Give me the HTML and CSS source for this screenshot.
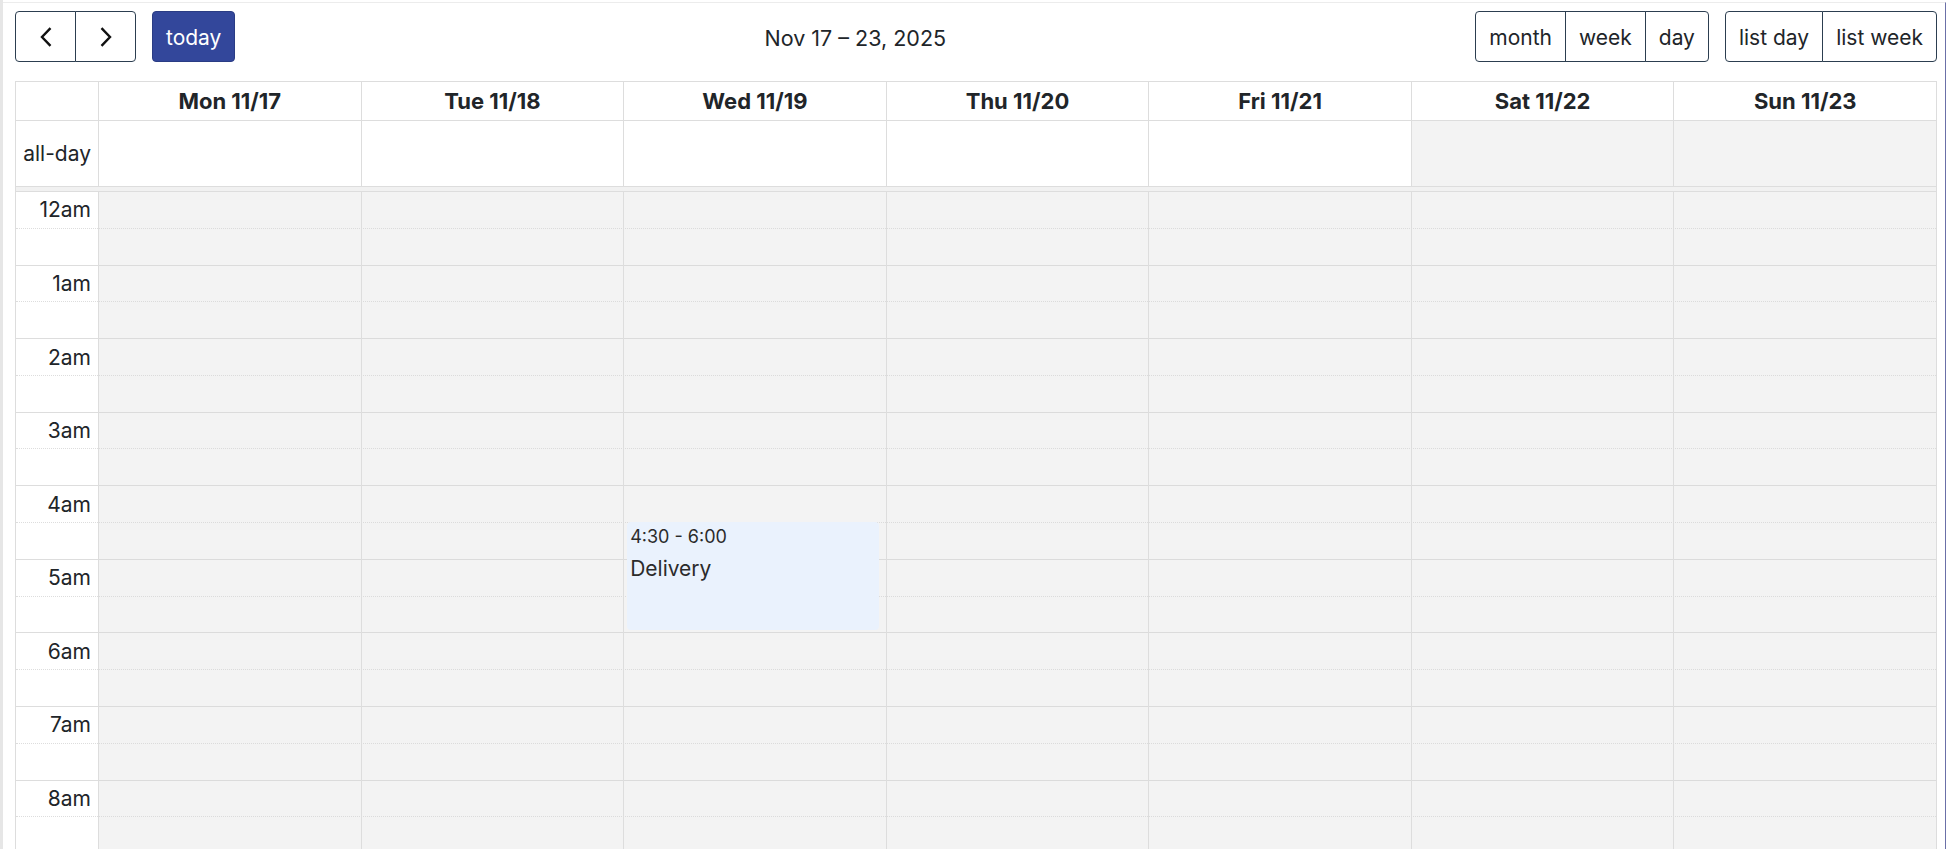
FILE: index.html
```html
<!DOCTYPE html>
<html lang="en">
<head>
<meta charset="utf-8">
<title>Calendar week</title>
<link rel="stylesheet" href="styles.css">
</head>
<body>
<div class="page">
  <div class="shell">
    <div class="toolbar">
      <div class="tb-group">
        <div class="btn-group">
          <button class="btn btn-icon" aria-label="prev">
            <svg width="12" height="20" viewBox="0 0 12 20"><polyline points="10.5,1.2 2,10 10.5,18.8" fill="none" stroke="#111" stroke-width="2.4" stroke-linejoin="miter"/></svg>
          </button>
          <button class="btn btn-icon" aria-label="next">
            <svg width="12" height="20" viewBox="0 0 12 20"><polyline points="1.5,1.2 10,10 1.5,18.8" fill="none" stroke="#111" stroke-width="2.4" stroke-linejoin="miter"/></svg>
          </button>
        </div>
        <button class="btn btn-primary">today</button>
      </div>
      <h2 class="title">Nov 17 – 23, 2025</h2>
      <div class="tb-group">
        <div class="btn-group">
          <button class="btn">month</button>
          <button class="btn">week</button>
          <button class="btn">day</button>
        </div>
        <div class="btn-group">
          <button class="btn">list day</button>
          <button class="btn">list week</button>
        </div>
      </div>
    </div>

    <div class="cal">
      <div class="row head">
        <div class="cell axis"></div>
        <div class="cell">Mon 11/17</div>
        <div class="cell">Tue 11/18</div>
        <div class="cell">Wed 11/19</div>
        <div class="cell">Thu 11/20</div>
        <div class="cell">Fri 11/21</div>
        <div class="cell">Sat 11/22</div>
        <div class="cell">Sun 11/23</div>
      </div>
      <div class="row allday">
        <div class="cell axis"><span class="axis-label">all-day</span></div>
        <div class="cell"></div>
        <div class="cell"></div>
        <div class="cell"></div>
        <div class="cell"></div>
        <div class="cell"></div>
        <div class="cell shaded"></div>
        <div class="cell shaded"></div>
      </div>
      <div class="divider"></div>
      <div class="tbody">
        <div class="slots">
          <div class="slot"><span class="slot-label">12am</span></div><div class="slot half"></div>
          <div class="slot"><span class="slot-label">1am</span></div><div class="slot half"></div>
          <div class="slot"><span class="slot-label">2am</span></div><div class="slot half"></div>
          <div class="slot"><span class="slot-label">3am</span></div><div class="slot half"></div>
          <div class="slot"><span class="slot-label">4am</span></div><div class="slot half"></div>
          <div class="slot"><span class="slot-label">5am</span></div><div class="slot half"></div>
          <div class="slot"><span class="slot-label">6am</span></div><div class="slot half"></div>
          <div class="slot"><span class="slot-label">7am</span></div><div class="slot half"></div>
          <div class="slot"><span class="slot-label">8am</span></div><div class="slot half"></div>
        </div>
        <div class="cols">
          <div class="col-axis"></div>
          <div class="col"></div>
          <div class="col"></div>
          <div class="col">
            <div class="event">
              <div class="event-time">4:30 - 6:00</div>
              <div class="event-title">Delivery</div>
            </div>
          </div>
          <div class="col"></div>
          <div class="col"></div>
          <div class="col"></div>
          <div class="col"></div>
        </div>
      </div>
    </div>
  </div>
</div>
</body>
</html>
```

FILE: styles.css
```css
html, body {
  margin: 0;
  padding: 0;
  height: 100%;
  overflow: hidden;
  background: #fff;
}

body {
  font-family: Inter, "Liberation Sans", sans-serif;
  font-size: 21px;
  color: #212529;
  --slot: 36.786px;
  --line: #dddddd;
}

.page {
  height: 100%;
  box-sizing: border-box;
  border-left: 3px solid #e6e6e6;
  padding-top: 2px;
}

.shell {
  height: 100%;
  box-sizing: border-box;
  border-top: 1px solid #ececec;
  border-right: 1px solid #6b70a8;
  margin-right: 1px;
  padding: 8px 8px 0 12px;
  display: flex;
  flex-direction: column;
}

/* toolbar */
.toolbar {
  display: flex;
  justify-content: space-between;
  align-items: center;
  margin-bottom: 19px;
}

.tb-group {
  display: flex;
  gap: 16px;
}

.btn-group {
  display: flex;
}

.btn {
  height: 51px;
  box-sizing: border-box;
  border: 1px solid #2c3e50;
  border-radius: 4px;
  background: #fff;
  color: #212529;
  font: inherit;
  line-height: 1.5;
  padding: 2px 13px 0;
  display: inline-flex;
  align-items: center;
  justify-content: center;
  cursor: pointer;
}

.btn-group .btn {
  border-radius: 0;
}

.btn-group .btn:first-child {
  border-radius: 4px 0 0 4px;
}

.btn-group .btn:last-child {
  border-radius: 0 4px 4px 0;
}

.btn-group .btn + .btn {
  margin-left: -1px;
}

.btn-icon {
  width: 61px;
  padding: 0;
}

.btn-primary {
  background: #33479b;
  border-color: #2a3c84;
  color: #fff;
}

.title {
  margin: 0;
  padding-top: 2px;
  font-size: 21.5px;
  font-weight: 400;
  color: #212529;
}

/* calendar grid */
.cal {
  border: 1px solid var(--line);
  border-bottom: 0;
  flex: 1;
  min-height: 0;
}

.row {
  display: grid;
  grid-template-columns: 82px repeat(7, 1fr);
  border-bottom: 1px solid var(--line);
}

.cell {
  border-left: 1px solid var(--line);
  box-sizing: border-box;
}

.cell.axis {
  border-left: 0;
}

.head .cell {
  height: 38px;
  display: flex;
  align-items: center;
  justify-content: center;
  font-size: 22px;
  font-weight: 700;
  color: #212529;
}

.allday .cell {
  height: 65px;
}

.allday .axis {
  display: flex;
  align-items: center;
  justify-content: flex-end;
  padding-right: 7px;
}

.shaded {
  background: rgba(215, 215, 215, 0.3);
}

.divider {
  height: 4px;
  background: rgba(208, 208, 208, 0.3);
  border-bottom: 1px solid var(--line);
}

.tbody {
  display: grid;
}

.slots,
.cols {
  grid-area: 1 / 1;
}

.slot {
  height: var(--slot);
  box-sizing: border-box;
  border-bottom: 1px dotted var(--line);
  display: flex;
  align-items: center;
  white-space: nowrap;
}

.slot.half {
  border-bottom-style: solid;
}

.slot-label {
  width: 75px;
  text-align: right;
}

.cols {
  display: grid;
  grid-template-columns: 82px repeat(7, 1fr);
}

.col {
  border-left: 1px solid var(--line);
  background: rgba(215, 215, 215, 0.3);
  position: relative;
}

.event {
  position: absolute;
  left: 3px;
  right: 2.5%;
  top: calc(var(--slot) * 9 - 1px);
  height: calc(var(--slot) * 3 - 2px);
  box-sizing: border-box;
  background: #eaf2fd;
  border-radius: 4px;
  padding: 1.4px 3px 0;
  color: #2b2b2b;
  overflow: hidden;
}

.event-time {
  font-size: 18px;
  line-height: 1.5;
  white-space: nowrap;
}

.event-title {
  margin-top: 3px;
  font-size: 21px;
  line-height: 1.5;
}
```
